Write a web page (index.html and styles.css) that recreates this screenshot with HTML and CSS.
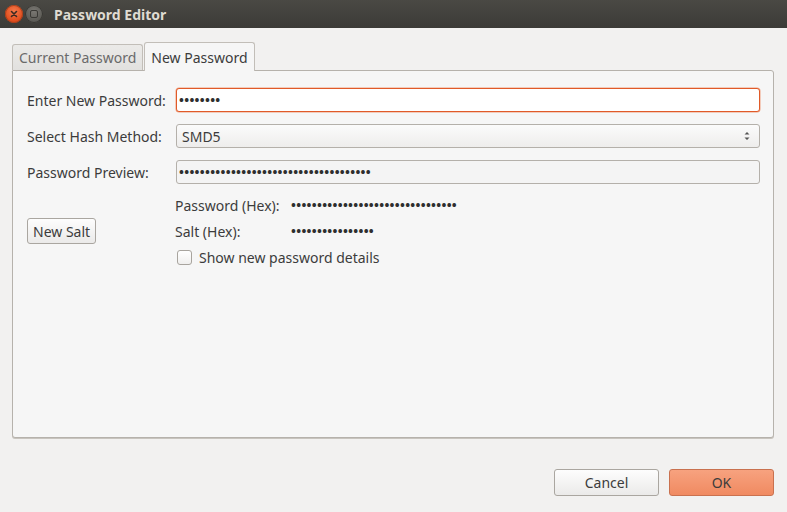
FILE: index.html
```html
<!DOCTYPE html>
<html>
<head>
<meta charset="utf-8">
<link rel="stylesheet" href="styles.css">
</head>
<body>
<div class="window">
  <div class="titlebar">
    <span class="wbtn close"><svg width="10" height="10" viewBox="0 0 10 10"><path d="M2.5 2.5 L7.5 7.5 M7.5 2.5 L2.5 7.5" stroke="#3c2a22" stroke-width="1.6" stroke-linecap="round"/></svg></span>
    <span class="wbtn mini"><span class="sq"></span></span>
    <span class="title">Password Editor</span>
  </div>
  <div class="content">
    <div class="tabs">
      <div class="tab">Current Password</div>
      <div class="tab active">New Password</div>
    </div>
    <div class="panel">
      <div class="form">
        <label class="lbl">Enter New Password:</label>
        <div class="input focus"><span class="dots">••••••••</span></div>
        <label class="lbl">Select Hash Method:</label>
        <div class="combo"><span>SMD5</span>
          <svg class="arrows" width="8" height="12" viewBox="0 0 8 12"><path d="M1.5 4.5 L4 2 L6.5 4.5 Z M1.5 7.5 L4 10 L6.5 7.5 Z" fill="#555"/></svg>
        </div>
        <label class="lbl">Password Preview:</label>
        <div class="input ro"><span class="dots">•••••••••••••••••••••••••••••••••••••</span></div>
      </div>
      <div class="lower">
        <div class="saltcol"><button class="btn">New Salt</button></div>
        <div class="details">
          <div class="drow"><span class="dl">Password (Hex):</span><span class="dots">••••••••••••••••••••••••••••••••</span></div>
          <div class="drow"><span class="dl">Salt (Hex):</span><span class="dots">••••••••••••••••</span></div>
          <div class="check"><span class="box"></span><span>Show new password details</span></div>
        </div>
      </div>
    </div>
    <div class="actions">
      <button class="btn big">Cancel</button>
      <button class="btn big ok">OK</button>
    </div>
  </div>
</div>
</body>
</html>
```
FILE: styles.css
```css
* { box-sizing: border-box; }
html, body { margin: 0; padding: 0; }
body {
  width: 787px; height: 512px; overflow: hidden;
  background: #f2f1f0;
  font-family: "Noto Sans", "DejaVu Sans", sans-serif;
  font-size: 14px;
  color: #3c3c3c;
}
.window { width: 787px; height: 512px; display: flex; flex-direction: column; }
.titlebar {
  height: 28px; flex: none;
  background: linear-gradient(#4a4944, #3c3b37);
  display: flex; align-items: center; padding-left: 5px;
}
.wbtn {
  width: 18px; height: 18px; border-radius: 50%;
  display: flex; align-items: center; justify-content: center;
  margin-right: 2px;
}
.close {
  background: radial-gradient(circle at 50% 35%, #f47a4c, #df4a1a 70%);
  box-shadow: inset 0 0 0 1px #a8401c;
}
.mini {
  background: radial-gradient(circle at 50% 35%, #7a7873, #5a5954 70%);
  box-shadow: inset 0 0 0 1px #383733;
}
.mini .sq { width: 8px; height: 8px; border: 1.5px solid #3a3935; border-radius: 2px; }
.title {
  margin-left: 9px; color: #dfdbd2; font-weight: bold; font-size: 14px;
}
.content { flex: 1; display: flex; flex-direction: column; padding: 14px 13px 0 12px; }
.tabs { display: flex; align-items: flex-end; height: 28px; position: relative; z-index: 1; }
.tab {
  height: 26px; padding: 0 6px; line-height: 25px;
  border: 1px solid #c2beb8; border-bottom: none; border-radius: 3px 3px 0 0;
  background: linear-gradient(#ebeae8, #e2e1df); color: #6a6a6a;
  margin-right: 1px;
}
.tab.active {
  height: 29px; line-height: 29px; background: #f6f6f6; color: #3c3c3c;
  margin-bottom: -1px;
}
.panel {
  height: 368px;
  background: #f6f6f6; border: 1px solid #b6b2ac; border-radius: 0 3px 3px 3px;
  box-shadow: 0 1px 0 #c8c4be;
  padding: 17px 13px 0 14px;
}
.form {
  display: grid; grid-template-columns: 149px 1fr; row-gap: 12px; align-items: center;
}
.lbl { white-space: nowrap; }
.input, .combo {
  height: 24px; border-radius: 3px; border: 1px solid #b4b0aa; padding: 0 2px;
  display: flex; align-items: center;
}
.dots {
  font-size: 13px; letter-spacing: 0.3px; color: #2e2e2e; font-weight: bold; line-height: 1;
}
.input.focus { border-color: #e05a28; background: #fff; box-shadow: 0 0 0 0.5px #f0a080; }
.input.ro { background: #f4f4f4; }
.combo {
  background: linear-gradient(#fbfbfb, #eeedec); justify-content: space-between; padding-left: 5px; padding-right: 8px;
}
.lower { display: flex; margin-top: 8px; }
.saltcol { width: 148px; display: flex; align-items: center; }
.btn {
  font-family: inherit; font-size: 14px; color: #3c3c3c;
  border: 1px solid #aaa6a0; border-radius: 3px;
  background: linear-gradient(#fdfdfd, #ebeae9);
  height: 26px; padding: 0 5px; margin: 0;
}
.details { display: flex; flex-direction: column; }
.drow { display: flex; height: 26px; align-items: center; }
.dl { width: 116px; }
.check { display: flex; align-items: center; height: 26px; padding-left: 2px; }
.box {
  width: 15px; height: 15px; border: 1px solid #a8a49e; border-radius: 3px;
  background: linear-gradient(#fff, #f0efee); margin-right: 7px;
}
.actions { display: flex; justify-content: flex-end; gap: 10px; margin-top: 31px; }
.btn.big { width: 105px; height: 27px; }
.btn.ok {
  background: linear-gradient(#f7a27f, #f08a61); border-color: #c9714f; color: #3c3c3c;
}
```
